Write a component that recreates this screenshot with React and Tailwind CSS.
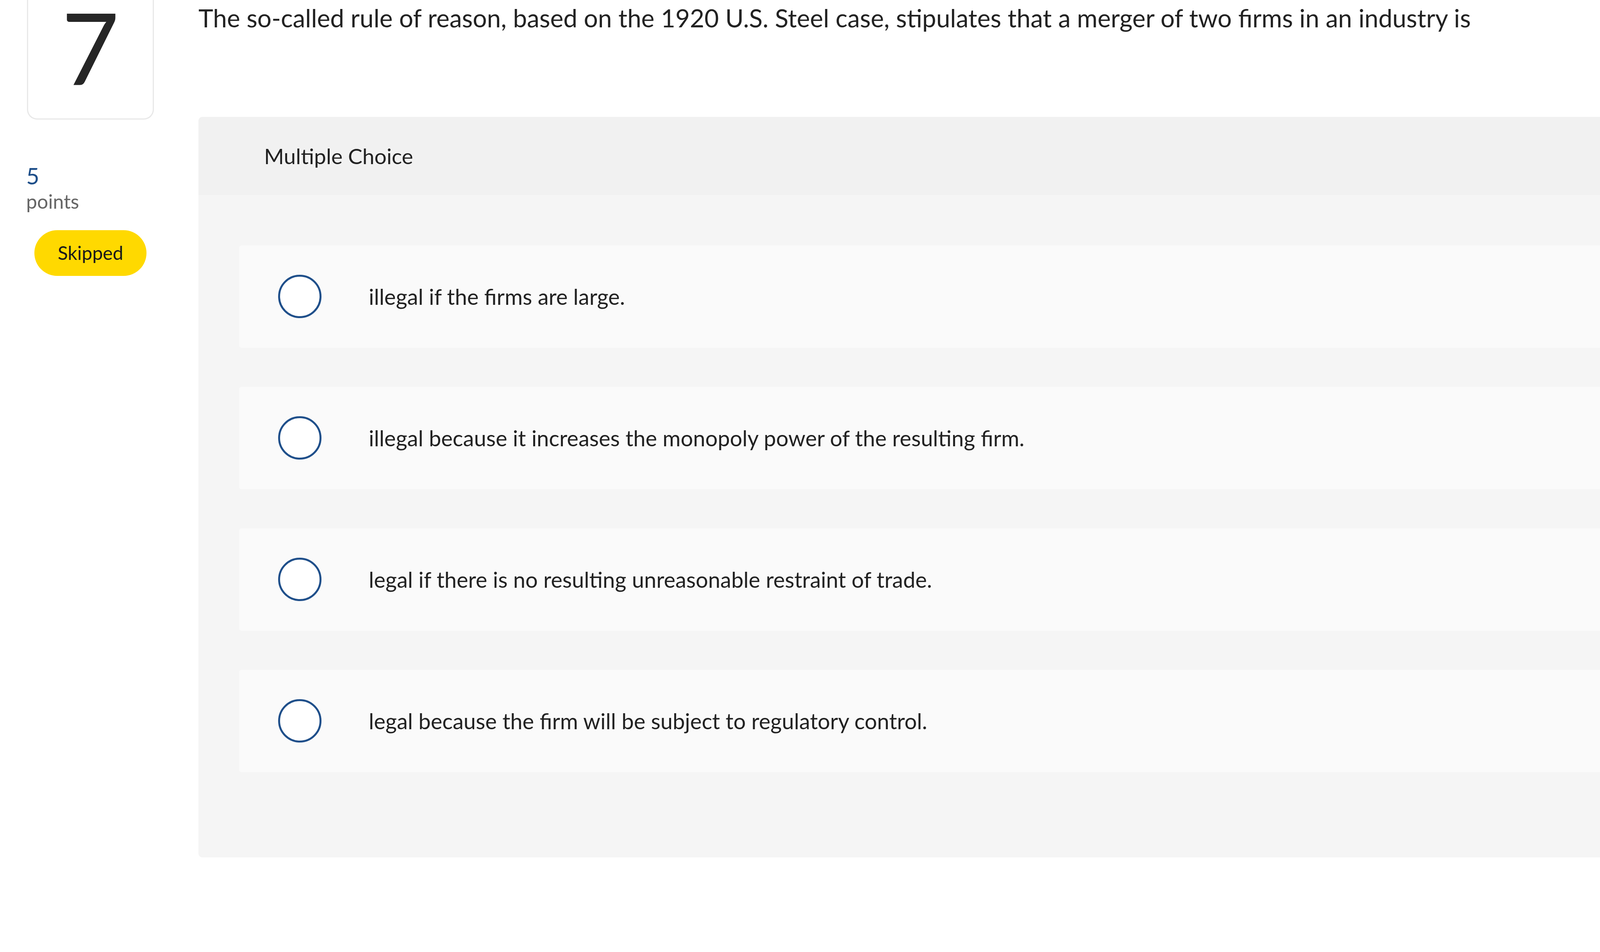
const options = [
  'illegal if the firms are large.',
  'illegal because it increases the monopoly power of the resulting firm.',
  'legal if there is no resulting unreasonable restraint of trade.',
  'legal because the firm will be subject to regulatory control.',
];

function Choice({ text }) {
  return (
    <label className="h-[262px] bg-[#fafafa] rounded-[6px] flex items-center pl-[100px] cursor-pointer">
      <span className="w-[111px] h-[111px] shrink-0 rounded-full border-[5px] border-[#1f4f8a] bg-white"></span>
      <span className="ml-[121px] text-[56px] leading-[1.2] text-[#222]">{text}</span>
    </label>
  );
}

export default function App() {
  return (
    <div className="min-h-screen bg-white flex font-['Lato',sans-serif] text-[#222] overflow-hidden">
      {/* question number + points */}
      <aside className="w-[508px] shrink-0 pl-[67px]">
        <div className="ml-[2px] h-[306px] w-[325px] rounded-b-[26px] border-[3px] border-t-0 border-[#e8e8e8] flex justify-center">
          <span className="mt-[16px] text-[255px] leading-[0.8] text-[#262626]">7</span>
        </div>
        <div className="mt-[109px] text-[58px] leading-[1.2] text-[#1d4e89]">5</div>
        <div className="text-[50px] leading-[1.2] text-[#666]">points</div>
        <span className="mt-[44px] ml-[21px] w-[287px] h-[117px] rounded-full bg-[#ffd900] flex items-center justify-center text-[48px] text-[#1a1a1a]">
          Skipped
        </span>
      </aside>

      {/* question body */}
      <main className="w-[4275px] shrink-0">
        <p className="mt-[8px] text-[64px] leading-[1.2] text-[#222]">
          The so-called rule of reason, based on the 1920 U.S. Steel case, stipulates that a merger of two firms in an industry is
        </p>

        <div className="mt-[214px] rounded-[10px] overflow-hidden">
          <div className="h-[200px] bg-[#f1f1f1] pl-[168px] flex items-center text-[55px] text-[#222]">
            Multiple Choice
          </div>
          <div className="bg-[#f5f5f5] pt-[129px] pb-[218px] pl-[104px] pr-[113px] flex flex-col gap-[100px]">
            {options.map((o) => (
              <Choice key={o} text={o} />
            ))}
          </div>
        </div>
      </main>
    </div>
  );
}
